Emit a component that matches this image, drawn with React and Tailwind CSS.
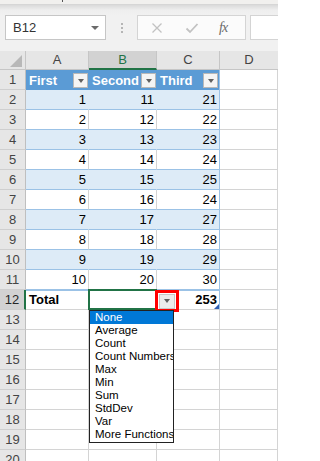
import React from 'react';

const colA = [1, 2, 3, 4, 5, 6, 7, 8, 9, 10];
const colB = [11, 12, 13, 14, 15, 16, 17, 18, 19, 20];
const colC = [21, 22, 23, 24, 25, 24, 27, 28, 29, 30];

const menuItems = [
  'None', 'Average', 'Count', 'Count Numbers', 'Max',
  'Min', 'Sum', 'StdDev', 'Var', 'More Functions...',
];

function FilterButton() {
  return (
    <div className="w-[15px] h-[15px] shrink-0 bg-[#f4f4f4] border border-[#b8b8b8] flex items-center justify-center">
      <div className="w-0 h-0 border-l-[3.5px] border-r-[3.5px] border-t-[4px] border-l-transparent border-r-transparent border-t-[#606060]"></div>
    </div>
  );
}

function RowHeader({ n, selected }) {
  return (
    <div
      className={`w-[26px] shrink-0 flex items-center justify-center text-[13px] border-b border-[#cfcfcf] ${
        selected ? 'bg-[#d2d2d2] text-[#262626] border-r-2 border-r-[#217346]' : 'bg-[#e6e6e6] text-[#444] border-r border-r-[#bfbfbf]'
      }`}
    >
      {n}
    </div>
  );
}

function EmptyD() {
  return <div className="flex-1 border-r border-b border-[#d4d4d4] bg-white"></div>;
}

function DataRow({ n, a, b, c }) {
  const band = n % 2 === 0;
  const bg = band ? 'bg-[#ddebf7]' : 'bg-white';
  const divider = band ? 'border-r-[#ddebf7]' : 'border-r-[#d4d4d4]';
  return (
    <div className="flex h-[20px]">
      <RowHeader n={n} />
      <div className={`w-[63px] ${bg} border-b border-b-[#9bc2e6] border-r ${divider} flex items-center justify-end pr-[2px] text-[13px] text-black`}>{a}</div>
      <div className={`w-[68px] ${bg} border-b border-b-[#9bc2e6] border-r ${divider} flex items-center justify-end pr-[2px] text-[13px] text-black`}>{b}</div>
      <div className={`w-[63px] ${bg} border-b border-b-[#9bc2e6] border-r border-r-[#9bc2e6] flex items-center justify-end pr-[2px] text-[13px] text-black`}>{c}</div>
      <EmptyD />
    </div>
  );
}

function BlankRow({ n }) {
  return (
    <div className="flex h-[20px]">
      <RowHeader n={n} />
      <div className="w-[63px] border-r border-b border-[#d4d4d4]"></div>
      <div className="w-[68px] border-r border-b border-[#d4d4d4]"></div>
      <div className="w-[63px] border-r border-b border-[#d4d4d4]"></div>
      <EmptyD />
    </div>
  );
}

export default function App() {
  return (
    <div className="relative w-[278px] h-[461px] overflow-hidden bg-white font-['Liberation_Sans',Arial,sans-serif] select-none">
      {/* ribbon bottom edge */}
      <div className="h-[4px] bg-[#f1f0ee] flex">
        <div className="ml-[62px] w-px h-[2px] bg-[#555]"></div>
      </div>

      {/* formula bar */}
      <div className="h-[47px] bg-gradient-to-b from-[#dadada] via-[#eeeeee] to-[#f1f1f1] [background-size:100%_10px] bg-no-repeat bg-[#f1f1f1] border-t border-[#d6d6d6] pt-[10px] flex items-start">
        <div className="ml-[5px] w-[101px] h-[25px] bg-white border border-[#c6c6c6] flex items-center justify-between pl-[7px] pr-[6px]">
          <span className="text-[13px] text-[#333]">B12</span>
          <div className="w-0 h-0 border-l-[4px] border-r-[4px] border-t-[4px] border-l-transparent border-r-transparent border-t-[#6b6b6b]"></div>
        </div>
        <div className="w-[31px] h-[25px] flex flex-col items-center justify-center gap-[2px]">
          <div className="w-[2px] h-[2px] bg-[#b5b5b5]"></div>
          <div className="w-[2px] h-[2px] bg-[#b5b5b5]"></div>
          <div className="w-[2px] h-[2px] bg-[#b5b5b5]"></div>
        </div>
        <div className="w-[109px] h-[25px] bg-[#fbfbfb] border border-[#d4d4d4] flex items-center">
          <svg width="12" height="12" viewBox="0 0 12 12" className="ml-[13px]">
            <path d="M1.5 1.5 L10.5 10.5 M10.5 1.5 L1.5 10.5" stroke="#c2c2c2" strokeWidth="1.3" fill="none" />
          </svg>
          <svg width="14" height="12" viewBox="0 0 14 12" className="ml-[22px]">
            <path d="M1.5 6.5 L5 10 L12.5 2" stroke="#c2c2c2" strokeWidth="1.8" fill="none" />
          </svg>
          <span className="ml-[20px] text-[14px] italic text-[#6a6a6a] font-['Liberation_Serif',serif] tracking-[-1px]">fx</span>
        </div>
        <div className="ml-[4px] flex-1 h-[25px] bg-white border border-[#d4d4d4] border-r-0"></div>
      </div>

      {/* column headers */}
      <div className="flex h-[19px] bg-[#e6e6e6] text-[13px] text-[#444]">
        <div className="w-[26px] border-r border-b border-[#c6c6c6] flex items-end justify-end pr-[3px] pb-[2px]">
          <svg width="12" height="12" viewBox="0 0 12 12">
            <polygon points="12,0 12,12 0,12" fill="#b8b8b8" />
          </svg>
        </div>
        <div className="w-[63px] border-r border-b border-[#c6c6c6] flex items-center justify-center">A</div>
        <div className="w-[68px] bg-[#d2d2d2] border-r border-r-[#c6c6c6] border-b-2 border-b-[#217346] flex items-center justify-center text-[#217346]">B</div>
        <div className="w-[63px] border-r border-b border-[#c6c6c6] flex items-center justify-center">C</div>
        <div className="flex-1 border-b border-[#c6c6c6] flex items-center justify-center">D</div>
      </div>

      {/* row 1: table header */}
      <div className="flex h-[20px]">
        <RowHeader n={1} />
        <div className="w-[63px] bg-[#5b9bd5] flex items-start justify-between pl-[3px] pr-[1px] pt-[3px]">
          <span className="text-[13px] font-bold text-white leading-[15px]">First</span>
          <FilterButton />
        </div>
        <div className="w-[68px] bg-[#5b9bd5] flex items-start justify-between pl-[3px] pr-[1px] pt-[3px]">
          <span className="text-[13px] font-bold text-white leading-[15px]">Second</span>
          <FilterButton />
        </div>
        <div className="w-[63px] bg-[#5b9bd5] border-r border-r-[#9bc2e6] flex items-start justify-between pl-[3px] pr-[1px] pt-[3px]">
          <span className="text-[13px] font-bold text-white leading-[15px]">Third</span>
          <FilterButton />
        </div>
        <EmptyD />
      </div>

      {colA.map((a, i) => (
        <DataRow key={i} n={i + 2} a={a} b={colB[i]} c={colC[i]} />
      ))}

      {/* row 12: total row */}
      <div className="flex h-[20px]">
        <RowHeader n={12} selected />
        <div className="w-[63px] border-t border-t-[#9bc2e6] border-b border-b-[#d4d4d4] border-r border-r-[#d4d4d4] flex items-center pl-[3px] text-[13px] font-bold text-black">Total</div>
        <div className="w-[68px] border-t border-t-[#9bc2e6] border-b border-b-[#d4d4d4] border-r border-r-[#d4d4d4] relative">
          <div className="absolute -left-[1px] -top-[2px] -right-[1px] -bottom-[1px] border-2 border-[#217346]"></div>
        </div>
        <div className="w-[63px] border-t border-t-[#9bc2e6] border-b border-b-[#d4d4d4] border-r border-r-[#9bc2e6] flex items-center justify-end pr-[2px] text-[13px] font-bold text-black relative">
          253
          <div className="absolute right-0 bottom-0 w-0 h-0 border-b-[5px] border-l-[5px] border-b-[#2f5fb3] border-l-transparent"></div>
        </div>
        <EmptyD />
      </div>

      {[13, 14, 15, 16, 17, 18, 19, 20].map((n) => (
        <BlankRow key={n} n={n} />
      ))}

      {/* total row dropdown button, marked in red */}
      <div className="absolute left-[155px] top-[290px] w-[24px] h-[22px] border-[3px] border-[#ff0000] flex items-center justify-center">
        <div className="w-[16px] h-[15px] bg-[#ececec] border border-[#c8c8c8] flex items-center justify-center">
          <div className="w-0 h-0 border-l-[3.5px] border-r-[3.5px] border-t-[4px] border-l-transparent border-r-transparent border-t-[#606060]"></div>
        </div>
      </div>

      {/* function list */}
      <div className="absolute left-[89px] top-[310px] w-[85px] h-[133px] bg-white border border-[#222] overflow-hidden">
        {menuItems.map((item, i) => (
          <div
            key={item}
            className={`h-[13px] pl-[5px] flex items-center whitespace-nowrap text-[11.5px] leading-[13px] ${
              i === 0 ? 'bg-[#0078d7] text-white' : 'text-black'
            }`}
          >
            {item}
          </div>
        ))}
      </div>
    </div>
  );
}
